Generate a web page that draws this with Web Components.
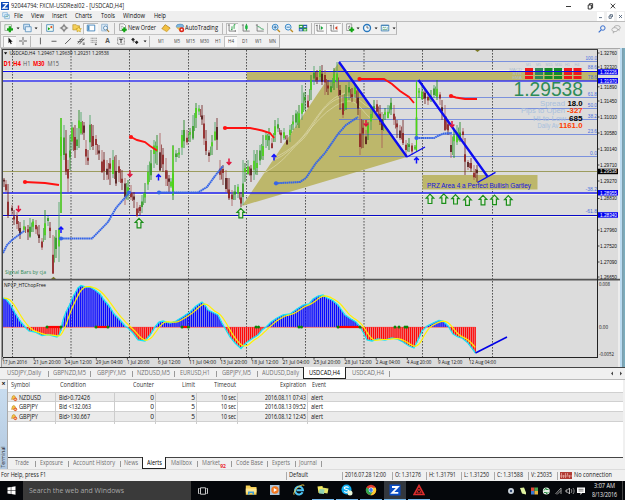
<!DOCTYPE html>
<html lang="en">
<head>
<meta charset="utf-8">
<title>92044794: FXCM-USDReal02 - [USDCAD,H4]</title>
<style>
    body {
        margin: 0;
        width: 625px;
        height: 500px;
        overflow: hidden;
        background: #f0f0f0;
        font: 6.6px/1 "Open Sans", "Liberation Sans", sans-serif;
        color: #222;
    }
</style>
</head>
<body>
<trade-window></trade-window>

<script>
// text squeezed or stretched to a fixed width
class FitText extends HTMLElement {
    constructor() {
        super()
        this.shadow = this.attachShadow({ mode: "open" })
    }
    connectedCallback() {
        const width = parseFloat(this.getAttribute('w'))
        this.shadow.innerHTML = `<style>
        :host{
            display:inline-block;
            flex:none;
            white-space:pre;
            width:${width}px;
        }
        span{
            display:inline-block;
            transform-origin:0 50%;
        }
        </style><span><slot></slot></span>`
        const span = this.shadow.querySelector('span')
        const natural = span.getBoundingClientRect().width
        span.style.transform = `scaleX(${width / natural})`
    }
}
customElements.define('fit-text', FitText)

const ICONS = {
    caret: '<path d="M4.3 5.3h3.6L6.1 7.4z" fill="#111"/>',
    newchart: '<path d="M1 2h8v7H1z" fill="#eef4ee" stroke="#7d9c7d" stroke-width=".8"/><path d="M7 4v7M3.6 7.5h7.2" stroke="#13a513" stroke-width="2.7"/>',
    profiles: '<path d="M2 1.5h7v6H2z" fill="#cfe4f6" stroke="#5c91bd"/><path d="M4 4.5h7v6H4z" fill="#e9f3fb" stroke="#5c91bd"/>',
    watch: '<path d="M2 2h8v8H2z" fill="#f4fff4" stroke="#4a87b8"/><path d="M3.5 8.7V5l3 2z" fill="#16a016"/><path d="M8.6 3.3v3.4l-3-2z" fill="#e34b16"/>',
    cross: '<circle cx="6" cy="6" r="2.8" fill="none" stroke="#555" stroke-width=".9"/><path d="M6 1v4M6 7v4M1 6h4M7 6h4" stroke="#555" stroke-width=".9"/>',
    folder: '<path d="M1 2h4l1 1.3h3v5H1z" fill="#f5d05b" stroke="#b28a1d" stroke-width=".7"/><path d="M8 4.5l1.1 2 2.2.3-1.6 1.6.4 2.2L8 9.6l-2 1 .3-2.2-1.5-1.6 2.1-.3z" fill="#ffe16b" stroke="#b98a00" stroke-width=".6"/>',
    navigator: '<path d="M1.5 2.5h9v7h-9z" fill="#fff" stroke="#3278b5"/><path d="M2 3h2.2v6H2z" fill="#4d8fc4"/>',
    tester: '<path d="M2 1.5h7v8H2z" fill="#dcebf7" stroke="#7ba4c8" stroke-width=".8"/><circle cx="6.6" cy="6" r="2.4" fill="#f2f8fd" stroke="#5182ad"/><path d="M8.3 7.8l2.6 3" stroke="#a77521" stroke-width="1.3"/>',
    order: '<path d="M2 1h5l2 2v6H2z" fill="#fff" stroke="#777" stroke-width=".8"/><path d="M3.4 4h3M3.4 6h2" stroke="#888" stroke-width=".8"/><path d="M7.5 5v6M4.5 8h6" stroke="#13a513" stroke-width="2.4"/>',
    book: '<path d="M1 7l4-5 6 4-4 4.5z" fill="#f3c141" stroke="#a8720b" stroke-width=".8"/><path d="M1 7.5l6 3.4 4-4.3" fill="none" stroke="#fff0bb" stroke-width=".6"/>',
    auto: '<ellipse cx="6" cy="4" rx="4.5" ry="2.7" fill="#7eb6e0" stroke="#3b79a9" stroke-width=".6"/><path d="M1.5 5.5h6L6 10z" fill="#edc14b"/><circle cx="8" cy="8" r="3" fill="#db2417"/><path d="M7 7h2v2H7z" fill="#fff"/>',
    bars: '<path d="M2.5 1.5v8.2h8M1 2.5h2M10 8.5v2" fill="none" stroke="#555" stroke-width=".8"/><path d="M6 4v4.5M8.5 2v5M8.5 2h1.6M4.8 8H6" stroke="#189b34" stroke-width="1" fill="none"/>',
    candle: '<path d="M2.5 1.5v8.2h8M1 2.5h2" fill="none" stroke="#555" stroke-width=".8"/><path d="M6.5 1v8" stroke="#087d23"/><path d="M5 3h3v4H5z" fill="#19b73f"/>',
    line: '<path d="M2.5 1.5v8.2h8M1 2.5h2" fill="none" stroke="#555" stroke-width=".8"/><path d="M3 4l2.5 1L8 7l2.5.6" fill="none" stroke="#22994a"/>',
    zoomin: '<circle cx="5" cy="5" r="3.5" fill="#dff1ff" stroke="#3f8bc9" stroke-width="1.2"/><path d="M7.7 7.7l3 3" stroke="#bd8b22" stroke-width="1.6"/><path d="M3 5h4M5 3v4" stroke="#20639e"/>',
    zoomout: '<circle cx="5" cy="5" r="3.5" fill="#dff1ff" stroke="#3f8bc9" stroke-width="1.2"/><path d="M7.7 7.7l3 3" stroke="#bd8b22" stroke-width="1.6"/><path d="M3 5h4" stroke="#20639e"/>',
    tile: '<path d="M1 2h5v4H1zM6 6h5v4H6z" fill="#2d9b36"/><path d="M6 2h5v4H6zM1 6h5v4H1z" fill="#245fb0"/><path d="M2 3.6h3v1.5H2zM7 3.6h3v1.5H7zM2 7.6h3v1.5H2zM7 7.6h3v1.5H7z" fill="#e9f6f0"/>',
    scroll: '<path d="M2.5 2v7.7h8M1 3h2M5.5 2v6" fill="none" stroke="#555" stroke-width=".8"/><path d="M7 3.5v5L10 6z" fill="#19a43c"/>',
    shift: '<path d="M2.5 2v7.7h8M1 3h2M5.5 2v6" fill="none" stroke="#555" stroke-width=".8"/><path d="M10 3.5v5L7 6z" fill="#d83a1b"/>',
    indic: '<path d="M2 1h6v8H2z" fill="#fff" stroke="#777" stroke-width=".8"/><path d="M3.5 7.5c2 0 1-5 3-5M3.5 4.6h3" stroke="#555" fill="none" stroke-width=".7"/><path d="M8 5v6M5 8h6" stroke="#13a513" stroke-width="2.4"/>',
    clock: '<circle cx="6" cy="6" r="4.2" fill="#f2faff" stroke="#2877bd" stroke-width="1.6"/><path d="M6 3.5V6h2" fill="none" stroke="#333" stroke-width=".8"/>',
    template: '<path d="M1.5 2.5h9v7h-9z" fill="#eef7ff" stroke="#3b7db3"/><path d="M1.5 3h9" stroke="#3b7db3"/><path d="M3 6l1.5-1 1 1L7 5M3 8h6M8 6h1.6" stroke="#3e9151" fill="none" stroke-width=".8"/>',
    search: '<circle cx="7" cy="4.8" r="2.7" fill="none" stroke="#386fd0" stroke-width="1.2"/><path d="M5 7L2 10" stroke="#386fd0" stroke-width="1.5"/>',
    chat: '<ellipse cx="7.4" cy="4.4" rx="3.7" ry="2.6" fill="#eee" stroke="#999" stroke-width=".8"/><ellipse cx="4.5" cy="6.8" rx="3.5" ry="2.4" fill="#f4f4f4" stroke="#999" stroke-width=".8"/><path d="M3 9l-.5 2 2-2M9 6.5l1 2" stroke="#999" fill="none" stroke-width=".7"/>',
    cursor: '<path d="M4.2 1.8v7l1.6-1.5 1.1 2.5 1.2-.6L7 6.9h2.2z" fill="#111"/>',
    cross2: '<path d="M6 1.3v3.9M6 6.8v3.9M1.3 6h3.9M6.8 6h3.9" stroke="#333" stroke-width=".9"/>',
    vline: '<path d="M6.5 2v8" stroke="#444"/>',
    hline: '<path d="M3 6.3h6" stroke="#444"/>',
    trend: '<path d="M2.5 9.5L9.5 2.7" stroke="#444"/>',
    channel: '<path d="M2 9L8 2M4 10l6-7M1.8 6.8l5 0M4 4.5h6M8 8.5h2.5M8 10h2.5" stroke="#444" stroke-width=".9"/>',
    fibo: '<path d="M2 2.7h8M2 5.2h8M2 7.5h8" stroke="#777" stroke-width=".9" stroke-dasharray="1.2 .4"/><path d="M8 9v2M7 10h2.6" stroke="#444" stroke-width=".8"/>',
    label: '<path d="M2 2.2h8v7.6H2z" fill="none" stroke="#555" stroke-width=".9" stroke-dasharray="1 .7"/><path d="M4 4h4M6 4v4.4" stroke="#222" stroke-width="1.1"/>',
    arrows: '<path d="M3.6 2l2.3 2.3-2.3 2L1.4 4.3zM8 5.4l2.2 2.2L8 9.8 5.8 7.6z" fill="#222"/><path d="M5 6l2 2M4 5.5V8" stroke="#222" stroke-width=".7"/>',
    bell: '<path d="M2 8c1.5-1.2.5-5.5 3.6-5.8C8.6 2.4 7.7 6 9.4 7.8z" fill="#f4c445" stroke="#af7510" stroke-width=".7"/><circle cx="8" cy="8" r="2.7" fill="#e4602c"/><path d="M6.5 8h3" stroke="#fff" stroke-width="1"/>'
}

class TradeIcon extends HTMLElement {
    constructor() {
        super()
        this.shadow = this.attachShadow({ mode: "open" })
    }
    connectedCallback() {
        const size = this.getAttribute('size') || 10
        this.shadow.innerHTML = `<style>
        :host{
            display:inline-flex;
            align-items:center;
            justify-content:center;
            flex:none;
            box-sizing:border-box;
            width:${this.getAttribute('w') || 12}px;
            height:11px;
        }
        :host([pressed]){ background:#f9f9f9; box-shadow:inset 1px 1px #bdbdbd; }
        svg{ flex:none; }
        </style>
        <svg width="${size}" height="${size}" viewBox="0 0 12 12">${ICONS[this.getAttribute('name')]}</svg>`
    }
}
customElements.define('trade-icon', TradeIcon)

class TitleBar extends HTMLElement {
    constructor() {
        super()
        this.shadow = this.attachShadow({ mode: "open" })
    }
    connectedCallback() {
        this.shadow.innerHTML = `<style>
        :host{ display:flex; align-items:center; height:11px; background:#fff; }
        .logo{ margin:0 2px 0 1px; }
        fit-text{ padding-top:1px; }
        .buttons{ margin-left:auto; }
        </style>
        <svg class="logo" width="8" height="8" viewBox="0 0 8 8"><rect width="8" height="8" fill="#0b48b8"/><path d="M1.6 1.7h4.6L2 6.2h4.7" fill="none" stroke="#fff" stroke-width="1.3"/></svg>
        <fit-text w="113"><slot></slot></fit-text>
        <svg class="buttons" width="60" height="10" viewBox="0 0 60 10" fill="none" stroke="#222" stroke-width=".9"><path d="M1 5.5h5M23.2 4h3.2v4h-3.2zM24.4 4V2.7h3.2V7h-1M45.7 2.7l4.4 4.6M50.1 2.7l-4.4 4.6"/></svg>
        `
    }
}
customElements.define('title-bar', TitleBar)

class MenuBar extends HTMLElement {
    constructor() {
        super()
        this.shadow = this.attachShadow({ mode: "open" })
    }
    connectedCallback() {
        const items = [['File', 9, 8], ['View', 13, 8], ['Insert', 15, 8], ['Charts', 17, 8.5], ['Tools', 14, 8.5], ['Window', 22, 8.5], ['Help', 12, 0]]
        this.shadow.innerHTML = `<style>
        :host{ display:flex; align-items:center; height:10px; background:#efefef; color:#111; border-bottom:1px solid #bcbcbc; }
        svg{ flex:none; margin:0 4px 0 2px; }
        .mdi{ margin:0 1px 0 auto; }
        </style>
        <svg width="8" height="8" viewBox="0 0 12 12"><path d="M1 1h7v6H1zM4 4h7v6H4z" fill="#e6f3fc" stroke="#6fa9d6"/><path d="M5 8l2-2 1 1 2-2" stroke="#5f9e62" fill="none"/></svg>
        ${items.map(i => `<fit-text w="${i[1]}" style="margin-right:${i[2]}px">${i[0]}</fit-text>`).join('')}
        <svg class="mdi" width="27" height="9" viewBox="0 0 27 9"><path d="M0 0h7v9H0zM10 0h7v9h-7zM20 0h7v9h-7z" fill="#fff"/><path d="M2 5.600h3M12 4h2.300v2.300H12zM13 4V2.700h2.500V5M22 3l3 3M25 3l-3 3" fill="none" stroke="#41566e" stroke-width=".8"/></svg>
        `
    }
}
customElements.define('menu-bar', MenuBar)

class ToolBars extends HTMLElement {
    constructor() {
        super()
        this.shadow = this.attachShadow({ mode: "open" })
    }
    icon(name, w, pressed) {
        return `<trade-icon name="${name}" w="${w}" ${pressed ? 'pressed' : ''}></trade-icon>`
    }
    sep(w) {
        return `<i style="width:${w}px"></i>`
    }
    connectedCallback() {
        const i = this.icon
        const s = this.sep
        const frames = [['M1', 18, 6], ['M5', 13, 6], ['M15', 14, 9], ['M30', 14, 9], ['H1', 13, 6], ['H4', 13, 6], ['D1', 15, 6], ['W1', 13, 7], ['MN', 14, 7]]
        this.shadow.innerHTML = `<style>
        :host{ display:block; height:26px; background:#f0f0f0; }
        .row{ display:flex; align-items:center; height:13px; box-sizing:border-box; }
        .group{ display:flex; align-items:center; height:13px; padding-left:2px; border-left:1px solid #bbb; border-right:1px solid #b5b5b5; border-bottom:1px solid #c4c4c4; box-sizing:border-box; }
        .right{ margin-left:auto; display:flex; padding-right:2px; }
        i{ flex:none; height:11px; background:linear-gradient(#b9b9b9,#b9b9b9) center/1px 100% no-repeat; }
        fit-text{ color:#111; }
        .A{ width:13px; text-align:center; font-weight:bold; color:#555; }
        .tf{ text-align:center; flex:none; font-size:5.6px; line-height:11px; }
        .tf fit-text{ color:#444; }
        .tf[pressed]{ background:#fafafa; box-shadow:inset 1px 1px #c0c0c0; }
        </style>
        <div class="row"><div class="group">
            ${i('newchart', 12)}${i('caret', 5)}${i('profiles', 14)}${i('caret', 4)}${s(6)}
            ${i('watch', 12)}${i('cross', 15)}${i('folder', 12)}${i('navigator', 15, true)}${i('tester', 13)}${s(6)}
            ${i('order', 11)}<fit-text w="28" style="margin-right:1px">New Order</fit-text>${i('book', 17)}${i('auto', 11)}<fit-text w="33" style="margin-right:1px">AutoTrading</fit-text>${s(7)}
            ${i('bars', 12, true)}${i('candle', 16)}${i('line', 12)}${s(3)}${i('zoomin', 13)}${i('zoomout', 14)}${i('tile', 13)}${s(5)}
            ${i('scroll', 12, true)}${i('shift', 15, true)}${s(3)}${i('indic', 11)}${i('caret', 5)}${i('clock', 13)}${i('caret', 5)}${i('template', 13)}${i('caret', 5)}
        </div><div class="right">${i('search', 14)}${i('chat', 14)}</div></div>
        <div class="row"><div class="group">
            ${i('cursor', 13, true)}${i('cross2', 13)}${s(3)}${i('vline', 15)}${i('hline', 14)}${i('trend', 13)}${i('channel', 13)}${i('fibo', 14)}<span class="A">A</span>${i('label', 14)}${i('arrows', 14)}${i('caret', 5)}${s(5)}
            ${frames.map(f => `<span class="tf" style="width:${f[1]}px" ${f[0] == 'H4' ? 'pressed' : ''}><fit-text w="${f[2]}">${f[0]}</fit-text></span>`).join('')}
        </div></div>
        `
    }
}
customElements.define('tool-bars', ToolBars)

// high and low of the price, x first
const RANGE = [
    [4,178,187],[6,180,192],[8,184,218],[12,205,215],[14,210,225],[17,212,229],[20,222,239],[24,220,232],[28,225,240],[30,218,238],
    [33,219,232],[36,220,234],[39,225,243],[42,238,250],[45,210,240],[48,216,226],[50,222,238],[53,235,273],[56,230,258],[59,202,262],
    [61,118,213],[64,125,160],[66,130,175],[68,160,192],[70,135,170],[72,122,150],[75,125,158],[77,128,150],[79,110,148],[81,112,135],
    [84,122,140],[86,140,165],[88,150,165],[90,115,150],[93,125,150],[96,135,155],[99,145,160],[102,150,172],[104,152,180],[107,160,180],
    [110,158,185],[113,150,178],[116,155,186],[119,160,182],[122,170,190],[125,178,205],[128,180,200],[131,185,200],[134,192,208],
    [137,202,217],[140,205,215],[142,195,213],[145,183,203],[148,165,190],[151,150,180],[154,140,168],[157,135,165],[160,133,170],
    [163,148,172],[166,158,186],[169,175,192],[171,178,188],[173,145,200],[176,150,162],[179,148,158],[182,130,155],[184,120,148],
    [187,130,145],[190,128,142],[193,115,140],[196,103,128],[199,105,115],[202,105,125],[204,115,145],[206,130,155],[209,150,162],
    [212,135,155],[215,122,140],[217,118,150],[220,160,180],[223,165,185],[226,170,192],[229,178,200],[232,190,206],[235,185,200],
    [238,184,198],[241,192,207],[243,160,205],[245,163,182],[248,160,175],[251,165,182],[254,150,180],[257,150,175],[260,145,165],
    [263,135,160],[266,132,148],[269,128,150],[272,138,148],[275,120,142],[278,118,132],[281,130,143],[284,128,140],[287,135,145],
    [290,125,142],[293,115,130],[296,110,128],[299,105,128],[302,85,120],[305,92,110],[308,95,108],[311,75,100],[314,66,85],
    [317,70,84],[320,66,80],[322,65,85],[325,70,95],[328,80,95],[331,80,92],[334,68,90],[337,62,88],[340,85,110],[343,95,118],
    [346,85,110],[349,82,100],[352,88,102],[355,85,98],[358,88,115],[360,110,155],[363,120,148],[366,130,145],[368,122,140],
    [371,105,130],[374,100,112],[377,100,115],[380,105,125],[382,112,148],[385,108,120],[388,105,118],[391,98,115],[394,105,125],
    [397,120,138],[400,125,140],[403,120,145],[406,140,157],[409,138,152],[412,143,155],[415,145,150],[416.5,80,152],[419,88,98],
    [422,85,100],[425,90,104],[428,92,105],[431,90,102],[434,85,98],[437,80,100],[440,92,105],[442,100,120],[445,105,130],
    [448,120,135],[451,135,158],[454,130,158],[457,125,145],[460,122,142],[463,128,140],[465,138,175],[468,160,170],[471,158,172],
    [474,165,180],[477,165,182]
]

const OSC = [
    [3,298],[6,299],[10,304],[15,313],[20,321],[25,327],[29,331],[35,332],[42,335.5],[48,334.5],[57,337],[59,335],[61,330],[63,320],
    [66,312],[70,304],[73,297],[78,288],[81,285.5],[86,287],[90,287],[95,290],[100,294],[104,300],[109,306],[114,314],[120,320],
    [125,326],[128,328],[133,333],[138,340],[145,341],[150,335],[155,327],[159,322],[163,321],[170,323],[176,321],[184,316],
    [190,312],[196,306],[202,302],[205,305],[208,310],[214,313],[218,315],[222,323],[226,330],[230,337],[235,343],[241,348.5],
    [246,343],[253,338],[258,335],[262,330],[266,327],[271,322],[277,318],[283,315],[290,314],[297,309],[303,305],[309,304],
    [313,299],[318,296],[323,295],[327,298],[332,300],[338,305],[345,315],[351,319],[356,322],[360,327],[363,332],[367,340],
    [372,341],[378,339],[385,340],[392,338],[397,339],[403,342],[409,346],[414,348],[418,340],[422,331],[427,326],[433,323],
    [439,320.5],[443,321],[448,326],[453,334],[458,337],[462,338],[468,343],[475.5,353]
]

const SANS = 'font-family="Liberation Sans, sans-serif"'

class PriceChart extends HTMLElement {
    constructor() {
        super()
        this.shadow = this.attachShadow({ mode: "open" })
    }
    at(list, x) {
        for (let i = 1; i < list.length; i++) {
            if (x <= list[i][0]) {
                const a = list[i - 1], b = list[i]
                const t = Math.max(0, (x - a[0]) / (b[0] - a[0]))
                return a[1] + (b[1] - a[1]) * t
            }
        }
        return list[list.length - 1][1]
    }
    text(x, y, str, len, extra = '') {
        return `<text x="${x}" y="${y}" textLength="${len}" lengthAdjust="spacingAndGlyphs" ${extra}>${str}</text>`
    }
    candle(x, hi, lo, up, k) {
        const len = lo - hi
        const top = hi + len * (0.2 + (k * 7 % 5) * 0.08)
        const body = len * (0.2 + (k * 3 % 4) * 0.1)
        const wick = up ? ['#128012', '#3fa05a'] : ['#6b1a1a', '#a85858']
        const fill = up ? ['#45d510', '#2f9a1c'] : ['#8b1a1a', '#4a1212']
        return `<path d="M${x} ${hi}V${lo}" stroke="${wick[k % 2]}" stroke-width=".8"/>
            <path d="M${x} ${top.toFixed(1)}v${body.toFixed(1)}" stroke="${fill[k % 3 ? 0 : 1]}" stroke-width="1.6"/>`
    }
    candles() {
        let out = ''
        RANGE.forEach((r, i) => {
            const next = RANGE[i + 1] || r
            const prev = RANGE[i - 1] || r
            out += this.candle(r[0], r[1], r[2], prev[1] + prev[2] > r[1] + r[2], i)
            // short bar halfway to the next one
            const hi = (r[1] + next[1]) / 2 + 4, lo = (r[2] + next[2]) / 2 - 3
            if (next[0] - r[0] > 2 && lo - hi > 2 && lo - hi < 30 && i % 2) {
                out += `<path d="M${r[0] + 1.5} ${hi}V${lo}" stroke="${next[1] + next[2] < r[1] + r[2] ? '#4aa84a' : '#8f3a3a'}" stroke-width=".8"/>`
            }
        })
        return out + '<path d="M61 118V213M173 146V192M416.5 82V151" stroke="#4bd80f" stroke-width="1.2"/>'
    }
    averages() {
        const red = [
            [[25,182],[45,183],[52,184],[59,185]],
            [[131,137],[137,140],[145,142],[150,146],[157,150.5]],
            [[225,128],[250,128],[262,130.5],[270,133],[274,138]],
            [[359.5,79],[384,79],[392,84],[400,91],[409,97],[414,103]],
            [[451,96],[456,97.5],[465,99],[477,99]]
        ]
        const blue = [
            [[3,253],[7,245],[12,240],[24,231]],
            [[61,238.5],[92,238.5],[108,222],[116,208],[129,193]],
            [[159,192.5],[198,192.5],[207,187],[215,176],[223,166]],
            [[276,183.3],[300,182],[306,178],[316,163],[325,153],[338,134],[346,125],[358,117]],
            [[416.5,138],[434,138],[440,135],[444,133.5],[452,133]]
        ]
        const draw = (list, attrs, color) => list.map(l =>
            `<polyline points="${l.join(' ')}" fill="none" stroke="${color}" ${attrs}/>` +
            (l[0][0] > 3 ? `<circle cx="${l[0][0]}" cy="${l[0][1]}" r="2.1" fill="${color}"/>` : '')).join('')
        return draw(blue, 'stroke-width="2" stroke-dasharray="1.7 .4"', '#3565e8') +
            draw(red, 'stroke-width="1.9"', '#f11') + '<circle cx="129" cy="192.5" r="2" fill="#3565e8"/>'
    }
    marks() {
        const down = [[18.5,209],[130,174],[229,162],[366,123.5],[452,124.5]]
        const up = [[61,229.5],[158.5,177],[274,157],[416.5,160]]
        const buy = [[139,223],[240.8,213],[430,198.7],[443.8,198.5],[455.5,199.2],[467.5,200.5],[483,200],[494.5,199.8],[508.3,200.3]]
        return down.map(p => `<path transform="translate(${p})" d="M0-3.500V2M-2.300 0L0 2.500 2.300 0" fill="none" stroke="#e0143c" stroke-width="1.5"/>`).join('') +
            up.map(p => `<path transform="translate(${p})" d="M0 3.500V-2M-2.300 0L0-2.500 2.300 0" fill="none" stroke="#1010ff" stroke-width="1.5"/>`).join('') +
            buy.map(p => `<path transform="translate(${p})" d="M0-4.600L3.800-.6H1.900V4.800H-1.900V-.6H-3.800z" fill="#e5eadb" stroke="#1a8e1a" stroke-width="1.2"/>`).join('')
    }
    scale() {
        const labels = [[53,'1.32760'],[67,'1.32320'],[86.8,'1.31890'],[101,'1.31450'],[117,'1.31010'],[133,'1.30580'],[149,'1.30140'],[165,'1.29710'],[181,'1.29270'],[198.5,'1.28830'],[230,'1.27960'],[246,'1.27520'],[262,'1.27090'],[277,'1.26650']]
        const tags = [[72,'1.32226','#0000f0'],[80.8,'1.31970','#0000f0'],[171.5,'1.29538','#000'],[192.8,'1.28955','#0000f0'],[215,'1.28340','#0000f0']]
        const fib = [[61.5,'100.0'],[70.5,'88.6'],[80,'78.6'],[97.5,'61.8'],[108.5,'50.0'],[119.5,'38.2'],[134,'23.6'],[156.5,'0.0'],[192,'-38.2'],[214.5,'-61.8']]
        return labels.map(l => `<path d="M597 ${l[0]}h2.5" stroke="#222" stroke-width=".8"/>` + this.text(600, l[0] + 1.8, l[1], 17, SANS + ' font-size="5.2"')).join('') +
            tags.map(t => `<rect x="598" y="${t[0] - 2.8}" width="20" height="5.5" fill="${t[2]}"/>` + this.text(600, t[0] + 1.8, t[1], 17, SANS + ' font-size="5.2" fill="#fff"')).join('') +
            fib.map(f => this.text(597 - f[1].length * 2.3, f[0] - 1.2, f[1], f[1].length * 2.3, SANS + ' fill="#4a6fe0" font-size="5"')).join('')
    }
    signals() {
        const xs = [525, 535, 544.5, 554, 564, 573.5]
        const cols = ['#f01818', '#2e8b57', '#158c28', '#158c28', '#f01818', '#f01818']
        const heads = ['M1', 'M5', 'M15', 'M30', 'H1', 'H4']
        let out = ''
        xs.forEach((x, i) => {
            out += this.text(x + 1, 66.2, heads[i], heads[i].length == 3 ? 7 : 5, SANS + ' fill="#a9bdd2" font-size="4"')
            for (let r = 0; r < 3; r++) out += `<rect x="${x}" y="${68 + r * 4}" width="8" height="3" fill="${cols[i]}"/>`
        })
        const names = ['MACD', 'STR', 'EMA']
        names.forEach((n, i) => out += this.text(522 - n.length * 3.2, 71 + i * 4, n, n.length * 3.2, SANS + ' fill="#aebfcd" font-size="3.2"'))
        const rows = [['Spread', '18.0', 540, 25, 567.5, '#000'], ['Pips to Open', '-327', 521, 44, 567, '#ff3c00'], ['Hi to Low', '685', 533, 33, 569, '#000'], ['Daily Av', '1161.0', 537.5, 21, 559, '#ff3c00']]
        out += this.text(513.5, 95.8, '1.29538', 69.5, SANS + ' fill="#2e8b57" font-size="20.5"')
        rows.forEach((r, i) => {
            const y = 106 + i * 7.4
            out += this.text(r[2], y, r[0], r[3], SANS + ' fill="#a8bfdc" font-size="7.6"')
            out += this.text(r[4], y, r[1], 582.5 - r[4], SANS + ` fill="${r[5]}" font-size="7.6" font-weight="bold"`)
        })
        return out
    }
    oscillator() {
        let bars = '', yellow = []
        for (let x = 4; x < 476; x += 1.955) {
            const y = this.at(OSC, x)
            bars += `<path d="M${x.toFixed(2)} 327V${y.toFixed(1)}" stroke="${y < 327 ? '#0808ff' : '#ff0808'}"/>`
            let sum = 0
            for (let k = 0; k < 5; k++) sum += this.at(OSC, Math.max(3, x - k * 2))
            yellow.push(x.toFixed(1) + ',' + (sum / 5).toFixed(1))
        }
        const chop = [[47,61],[96,108],[182,188.5],[338,360]]
        const dots = [47,61,96,108,182,188.5,256,258.5,299,301.5,338,360,395,399,405,407]
        return `<g stroke-width="1.45">${bars}</g>
            <path d="M3 327.3H475.5" stroke="#f33" stroke-width=".6"/>
            <polyline points="${OSC.join(' ')}" fill="none" stroke="#14e6f4" stroke-width="1.3"/>
            <polyline points="${yellow.join(' ')}" fill="none" stroke="#fff200" stroke-width="1.2"/>
            ${chop.map(c => `<path d="M${c[0]} 327H${c[1]}" stroke="#f00" stroke-width="2.2"/>`).join('')}
            ${dots.map(d => `<circle cx="${d}" cy="327" r="1.5" fill="#0a860a"/>`).join('')}
            <path d="M475.5 353L507 337" stroke="#0000e6" stroke-width="1.5"/>`
    }
    dates() {
        const list = ['17 Jun 2016', '21 Jun 20:00', '24 Jun 12:00', '29 Jun 04:00', '1 Jul 20:00', '6 Jul 12:00', '11 Jul 04:00', '13 Jul 20:00', '18 Jul 12:00', '21 Jul 04:00', '25 Jul 20:00', '28 Jul 12:00', '2 Aug 04:00', '4 Aug 20:00', '9 Aug 12:00', '12 Aug 04:00']
        return list.map((d, i) => `<path d="M${3 + i * 31.1} 357.5v2.2" stroke="#222" stroke-width=".8"/>` +
            this.text(2.5 + i * 31.1, 363.6, d, d.length > 11 ? 27 : i < 6 && i ? 22.5 : 24.5)).join('')
    }
    // presentation attributes lose to the text rule, so they move into style
    styled(markup) {
        return markup.replace(/<text ([^>]*)>/g, (m, attrs) => {
            let css = ''
            attrs = attrs.replace(/(fill|font-size|font-family|font-weight)="([^"]*)"/g, (a, k, v) => {
                css += `${k}:${v}${k == 'font-size' ? 'px' : ''};`
                return ''
            })
            return `<text ${attrs} style="${css}">`
        })
    }
    connectedCallback() {
        const grid = [12.5, 71, 129.5, 188.5, 246.5, 305.5, 364, 422.5, 492.5]
        this.shadow.innerHTML = `<style>
        :host{ display:block; height:319px; }
        svg{ display:block; }
        text{ font-family:"Open Sans", sans-serif; font-size:5.6px; fill:#111; }
        </style>
        <svg width="625" height="319" viewBox="0 48 625 319">
            <defs><clipPath id="pane"><rect x="3" y="50" width="594" height="307"/></clipPath></defs>
            <rect y="48" width="625" height="319" fill="#dcdcdc"/>
            <path d="M0 48.5H620" stroke="#a9a9a9"/>
            <path d="M2 49.5H598" stroke="#3c3c3c"/>
            <path d="M.5 48V367" stroke="#e8e8e8"/><path d="M1.5 48V367" stroke="#999"/><path d="M2.5 49V357" stroke="#444"/>
            <rect x="618" y="49" width="2" height="318" fill="#ececec"/>
            <rect x="620" y="48" width="2.5" height="319" fill="#b9daf0"/>
            <rect x="622.5" y="48" width="1" height="319" fill="#2b6478"/>
            <rect x="623.5" y="48" width="1.5" height="319" fill="#7badbf"/>
            <g clip-path="url(#pane)">
                <path d="${grid.map(x => `M${x} 50V357`).join('')}" stroke="#444" stroke-width=".9" stroke-dasharray="1.6 1.4"/>
                <path d="M3 70.5H597M3 79.5H597M3 194.5H597M3 216.5H597" stroke="#f6f6dc"/>
                <path d="M247 72H597V81H247zM242 206L339 62 407 157zM422.5 175H537.5V189.5H422.5z" fill="#bdb76b"/>
                <path d="M3 171.5H597" stroke="#8c8c3e" stroke-width=".8"/>
                <path d="M339 61.5H597M339 97.5H597M339 108.5H597M339 119.5H597M339 134.5H597M339 156.5H597" stroke="#5070dc" stroke-width=".7"/>
                <path d="M3 71.5H597" stroke="#0c0cf0"/><path d="M3 81H597" stroke="#3838f0" stroke-width="1.6"/>
                <path d="M3 193H597" stroke="#2020f0" stroke-width="1.6"/><path d="M3 215.5H597" stroke="#0808c8"/>
                <path d="M262 174C285 162 290 150 301 141S320 104 340 98 360 106 374 109M272 161C300 150 312 120 335 106S360 112 372 119M276 157C290 150 300 142 310 127S330 97 345 93" fill="none" stroke="#ddd8ad" stroke-width=".7"/>
                ${this.candles()}
                ${this.averages()}
                <path d="M339 62L407 157M418.5 80L487.5 176.5" stroke="#0c0cf0" stroke-width="2.3"/>
                <path d="M407 157L425 147M477.5 182.5L495.5 172.3" stroke="#0c0cf0" stroke-width="1.4"/>
                ${this.marks()}
                <path d="M475 50h5l-2.5 2zM51 279l2.5-2.2 2.5 2.2z" fill="#7c7a23"/>
                ${this.oscillator()}
            </g>
            <path d="M4 52.3h3.2L5.6 54.5z" fill="#000"/>
            ${this.text(9.5, 55.3, 'USDCAD,H4&#160; 1.29467 1.29639 1.29231 1.29538', 99.5)}
            <g font-weight="bold">
                ${this.text(3.5, 66, 'D1', 7.5, 'style="fill:#f00;font-size:7px"')}
                ${this.text(13, 66, 'H4', 8, 'style="fill:#f00;font-size:7px"')}
                ${this.text(23, 66, 'H1', 7.5, 'style="fill:#555;font-size:7px;font-weight:normal"')}
                ${this.text(33, 66, 'M30', 11.5, 'style="fill:#f00;font-size:7px"')}
                ${this.text(47.5, 66, 'M15', 11.5, 'style="fill:#555;font-size:7px;font-weight:normal"')}
            </g>
            ${this.styled(this.scale())}
            ${this.styled(this.signals())}
            ${this.text(5, 273.5, 'Signal Bars by cja', 41, 'style="fill:#2e8b57;font-size:6px"')}
            ${this.text(427, 188, 'PRZ Area 4 a Perfect Bullish Gartley', 104, 'style="fill:#1414e0;font:6.6px Liberation Sans, sans-serif"')}
            <path d="M3 279.7H620" stroke="#555" stroke-width="1.8"/>
            <path d="M597.5 50V357.5M3 357.5H598" stroke="#222" fill="none"/>
            ${this.text(4, 287, 'NPCP_HTChopFree', 42)}
            ${this.text(599, 286, '0.008', 11)}${this.text(599, 329, '0.00', 9)}${this.text(599, 356, '-0.0052', 15)}
            ${this.dates()}
        </svg>`
    }
}
customElements.define('price-chart', PriceChart)

// strip of tabs, each [label, text width, tab width, 1 if selected or a counter]
class TabStrip extends HTMLElement {
    constructor() {
        super()
        this.shadow = this.attachShadow({ mode: "open" })
    }
    connectedCallback() {
        const tabs = JSON.parse(this.getAttribute('tabs'))
        this.shadow.innerHTML = `<style>
        :host{ display:flex; align-items:stretch; height:11px; background:#f0f0f0; border-top:1px solid #444; box-sizing:border-box; color:#707070; }
        span{ display:flex; align-items:center; justify-content:center; flex:none; box-sizing:border-box; }
        span:not(.on)::after{ content:""; align-self:center; width:1px; height:6px; background:#999; margin-right:-1px; margin-left:auto; }
        span:not(.on) fit-text{ margin-left:auto; }
        .on{ background:#fff; color:#000; border:solid #222; border-width:0 1px 1px; margin-top:-1px; padding-top:1px; }
        sub{ color:#e8262a; font-size:5px; line-height:3px; align-self:flex-end; margin-bottom:1px; font-weight:bold; }
        slot{ display:block; margin-left:auto; }
        </style>
        ${tabs.map(t => `<span class="${t[3] == 1 ? 'on' : ''}" style="width:${t[2]}px"><fit-text w="${t[1]}">${t[0]}</fit-text>${t[3] > 1 ? `<sub>${t[3]}</sub>` : ''}</span>`).join('')}
        <slot></slot>`
    }
}
customElements.define('tab-strip', TabStrip)

class TerminalPanel extends HTMLElement {
    constructor() {
        super()
        this.shadow = this.attachShadow({ mode: "open" })
    }
    connectedCallback() {
        const rows = [
            ['NZDUSD', 22, 'Bid>0.72426', 31, '2016.08.11 07:43'],
            ['GBPJPY', 19, 'Bid <132.063', 32, '2016.08.13 09:52'],
            ['GBPJPY', 19, 'Bid>130.667', 31, '2016.08.12 12:45']
        ]
        const tabs = [['Trade', 14, 27], ['Exposure', 23, 33], ['Account History', 42, 52], ['News', 14, 22], ['Alerts', 15, 24, 1], ['Mailbox', 21, 31], ['Market', 18, 34, 92], ['Code Base', 27, 36], ['Experts', 18, 28], ['Journal', 18, 26]]
        this.shadow.innerHTML = `<style>
        :host{ display:flex; height:90px; background:#f0f0f0; border-top:1px solid #bbb; box-sizing:border-box; }
        .side{ width:7px; display:flex; flex-direction:column; align-items:center; justify-content:space-between; flex:none; background:linear-gradient(#f0f0f0 9px,#c8dcef 9px,#b2c8df); color:#111; }
        .side b{ font-size:7px; line-height:7px; }
        .main{ flex:1; display:flex; flex-direction:column; background:#fff; border-left:1px solid #aaa; border-right:2px solid #f0f0f0; min-width:0; }
        .r{ display:grid; grid-template-columns:48px 59px 41px 41px 41px 70px 1fr; height:9.7px; align-items:stretch; border-bottom:1px solid #d0d0d0; box-sizing:border-box; color:#111; }
        .r>div{ display:flex; align-items:center; padding:0 1px 1px 3px; border-right:1px solid #ccc; }
        .r>div:last-child{ border:0; }
        .r .n{ justify-content:flex-end; }
        .r.head{ height:12.5px; color:#333; }
        .r.head>div{ border-color:transparent; padding-bottom:0; }
        .head>div:last-child{ padding-left:4px; }
        .r:nth-child(even){ background:#ebebeb; }
        tab-strip{ margin-top:auto; height:12px; }
        </style>
        <div class="side"><b>×</b><svg width="7" height="24" viewBox="0 0 7 24"><text transform="translate(5.3 22.5) rotate(-90)" textLength="21" lengthAdjust="spacingAndGlyphs" font-size="4.9" fill="#111">Terminal</text></svg></div>
        <div class="main">
            <div class="r head">
                <div><fit-text w="19">Symbol</fit-text></div>
                <div style="padding-left:4px"><fit-text w="26">Condition</fit-text></div>
                <div class="n"><fit-text w="21">Counter</fit-text></div>
                <div class="n"><fit-text w="13">Limit</fit-text></div>
                <div class="n"><fit-text w="22">Timeout</fit-text></div>
                <div class="n"><fit-text w="26">Expiration</fit-text></div>
                <div><fit-text w="14">Event</fit-text></div>
            </div>
            ${rows.map(r => `<div class="r">
                <div style="padding-left:1px"><trade-icon name="bell" w="10" size="8"></trade-icon><fit-text w="${r[1]}">${r[0]}</fit-text></div>
                <div><fit-text w="${r[3]}">${r[2]}</fit-text></div>
                <div class="n">0</div>
                <div class="n">5</div>
                <div class="n"><fit-text w="15">10 sec</fit-text></div>
                <div class="n"><fit-text w="41">${r[4]}</fit-text></div>
                <div><fit-text w="12">alert</fit-text></div>
            </div>`).join('')}
            <tab-strip tabs='${JSON.stringify(tabs)}'></tab-strip>
        </div>`
    }
}
customElements.define('terminal-panel', TerminalPanel)

class StatusBar extends HTMLElement {
    constructor() {
        super()
        this.shadow = this.attachShadow({ mode: "open" })
    }
    connectedCallback() {
        const cells = [['Default', 19, 56], ['2016.07.28 12:00', 41, 50], ['O: 1.31276', 26, 34], ['H: 1.31791', 27, 35], ['L: 1.31250', 25, 33], ['C: 1.31588', 26, 34], ['V: 25035', 21, 29]]
        this.shadow.innerHTML = `<style>
        :host{ display:flex; align-items:center; height:12px; background:#f0f0f0; border-top:1px solid #dcdcdc; box-sizing:border-box; color:#222; }
        .help{ width:285px; padding-left:1px; }
        span{ display:flex; align-items:center; height:8px; box-sizing:border-box; padding-left:2px; border-left:1px solid #aaa; flex:none; }
        svg{ margin-right:2px; }
        </style>
        <div class="help"><fit-text w="45">For Help, press F1</fit-text></div>
        ${cells.map(c => `<span style="width:${c[2]}px"><fit-text w="${c[1]}">${c[0]}</fit-text></span>`).join('')}
        <span><svg width="12" height="7" viewBox="0 0 12 7"><rect width="12" height="7" fill="#b23b34"/><path d="M1.5 1v5M3.5 3v3M5.5 1v5M7.5 1v2.5M9.5 3v3M0 4h12" stroke="#e9b0a9" stroke-width=".7"/></svg><fit-text w="38">No connection</fit-text></span>`
    }
}
customElements.define('status-bar', StatusBar)

class TaskBar extends HTMLElement {
    constructor() {
        super()
        this.shadow = this.attachShadow({ mode: "open" })
    }
    app(art, state = '') {
        return `<div class="app ${state}"><svg width="12" height="12" viewBox="0 0 12 12">${art}</svg></div>`
    }
    connectedCallback() {
        this.shadow.innerHTML = `<style>
        :host{ display:flex; align-items:center; height:19px; background:#05070b; color:#eee; }
        .start{ width:23px; display:flex; justify-content:center; }
        .search{ width:168px; height:19px; display:flex; align-items:center; background:#3a3a3a; color:#a8a8a8; font-size:7.4px; padding-left:6px; box-sizing:border-box; }
        .view{ width:24px; display:flex; justify-content:center; margin-right:24px; }
        .app{ width:22px; margin:0 1px; height:19px; display:flex; align-items:center; justify-content:center; box-sizing:border-box; border-bottom:1px solid transparent; }
        .run{ border-color:#76b9ed; }
        .active{ background:#33373d; }
        .tray{ margin-left:auto; display:flex; align-items:center; }
        .clock{ display:flex; flex-direction:column; align-items:center; gap:2px; width:36px; font-size:6.2px; margin-left:1px; margin-right:2px; border-right:1px solid #444; height:19px; justify-content:center; }
        </style>
        <div class="start"><svg width="9" height="9" viewBox="0 0 9 9"><path d="M.5 1.5l3.3-.5v3.2H.5zM4.3.9L8.5.3v3.9H4.3zM.5 4.8h3.3V8L.5 7.5zM4.3 4.8h4.2v3.9l-4.2-.6z" fill="#fff"/></svg></div>
        <div class="search"><fit-text w="95">Search the web and Windows</fit-text></div>
        <div class="view"><svg width="10" height="8" viewBox="0 0 10 8"><path d="M2.5.8h5v6.4h-5zM1.5 1.5h-1v5h1M8.5 1.5h1v5h-1" fill="none" stroke="#ddd" stroke-width=".9"/></svg></div>
        ${this.app('<path d="M.8 1.5h4L6 3h5.5v7.7H.8z" fill="#f5cf55"/><path d="M.8 4.5h10.7v4H.8z" fill="#ffe791"/><path d="M3 7.5h6v3.2H7.5V9h-3v1.7H3z" fill="#3e9dd7"/>')}
        ${this.app('<rect x="1" y="1" width="9.5" height="10" fill="#a9c4dc"/><circle cx="6" cy="6" r="3.7" fill="#f47820"/><path d="M4.8 4v4l3.3-2z" fill="#fff"/>')}
        ${this.app('<path d="M9.6 8.3A4 4 0 1 1 10 6.2H3.5" fill="none" stroke="#4fc4f3" stroke-width="2"/><path d="M1 10.7C-.5 8 7-1 11.3 1.3" fill="none" stroke="#f3cf4b"/>')}
        ${this.app('<path d="M.5 2.5l5-.6 1 6-5 1z" fill="#f7ea5f"/><path d="M5 3.5l6.5 1-1 5-6-1z" fill="#e4e36a"/><path d="M2.5 5l5 .5-.5 4.5-5-.5z" fill="#8fd3b4"/>', 'run')}
        ${this.app('<circle cx="5.5" cy="5.5" r="5" fill="#10aef1"/><path d="M7.6 3.6c-1-1-4.5-1-4.3.7.2 1.6 4.3.8 4.3 2.5S4.5 8.800 3.200 7.400" fill="none" stroke="#fff" stroke-width="1.2"/><circle cx="9" cy="9" r="2.5" fill="#eaf6d8"/>', 'run')}
        ${this.app('<circle cx="6" cy="6" r="5.2" fill="#e33b2e"/><path d="M6 6L1.5 3.4A5.2 5.2 0 0 0 5.5 11.2L8.3 7z" fill="#2fa84f"/><path d="M6 6L8.3 7 5.6 11.2A5.2 5.2 0 0 0 10.7 3.8H6z" fill="#fbce33"/><circle cx="6" cy="6" r="2.4" fill="#fff"/><circle cx="6" cy="6" r="1.9" fill="#3d7ff0"/>', 'run')}
        ${this.app('<rect x=".5" y=".5" width="11" height="11" fill="#0b4dc5"/><path d="M3 3h5.8L3.3 8.8H9.3" fill="none" stroke="#fff" stroke-width="1.8"/>', 'run active')}
        ${this.app('<path d="M6 1.5l5 9H1z" fill="none" stroke="#dc2c2c" stroke-width="1.6"/><path d="M6 5l2.2 3.9H3.8z" fill="none" stroke="#dc2c2c"/>', 'run')}
        <div class="tray">
            <svg width="78" height="12" viewBox="508 0 78 12">
                <circle cx="512" cy="6" r="3" fill="#ccd4dc"/><circle cx="512" cy="6" r="1.2" fill="#334a73"/>
                <path d="M521 3l4-.5 2 5v2l-4-1z" fill="#e0f2a0"/>
                <path d="M532 2.5h3.5V6H532z" fill="#e04938"/><path d="M535.5 2.5h3.5V6h-3.5z" fill="#4ba54f"/><path d="M532 6h3.5v3.5H532z" fill="#3a78d2"/><path d="M535.5 6h3.5v3.5h-3.5z" fill="#e8b33c"/>
                <circle cx="547.3" cy="6" r="3.5" fill="#e5eee5"/><path d="M545 5.5l2-2.5v1.5h2.5M549.5 7l-2 2V7.5H545" stroke="#31914a" fill="none"/>
                <path d="M556.5 9l5.5-6v6M558 9.5l4-4" stroke="#999" fill="none"/>
                <path d="M567 5h1.5l2-2v6l-2-2H567z" fill="none" stroke="#ddd" stroke-width=".8"/><path d="M572 4c1 1 1 3 0 4M574 3c1.5 2 1.5 4 0 6" stroke="#aaa" fill="none" stroke-width=".8"/>
                <path d="M578 2.5h8v5.5h-3l-1.5 2V8H578z" fill="#fff"/><path d="M579.5 4.3h5M579.5 6h5" stroke="#444" stroke-width=".7"/>
            </svg>
            <div class="clock"><fit-text w="21">3:07 AM</fit-text><fit-text w="25">8/13/2016</fit-text></div>
        </div>`
    }
}
customElements.define('task-bar', TaskBar)

class TradeWindow extends HTMLElement {
    constructor() {
        super()
        this.shadow = this.attachShadow({ mode: "open" })
    }
    connectedCallback() {
        const charts = [['USDJPY,Daily', 34, 48], ['GBPNZD,M5', 33, 42], ['GBPJPY,M5', 29, 42], ['NZDUSD,M5', 33, 42], ['EURUSD,H1', 30, 42], ['GBPJPY,M5', 29, 41], ['AUDUSD,Daily', 37, 46], ['USDCAD,H4', 31, 43, 1], ['USDCAD,H4', 32, 43]]
        this.shadow.innerHTML = `<style>
        :host{ display:flex; flex-direction:column; width:625px; height:500px; }
        :host>*{ flex:none; }
        .charts{ height:12px; }
        </style>
        <title-bar>92044794: FXCM-USDReal02 - [USDCAD,H4]</title-bar>
        <menu-bar></menu-bar>
        <tool-bars></tool-bars>
        <price-chart></price-chart>
        <tab-strip class="charts" tabs='${JSON.stringify(charts)}'><svg width="16" height="10" viewBox="0 0 16 10" fill="#444"><path d="M4 3.5v4L2 5.5zM11 3.5v4l2-2z"/></svg></tab-strip>
        <terminal-panel></terminal-panel>
        <status-bar></status-bar>
        <task-bar></task-bar>`
    }
}
customElements.define('trade-window', TradeWindow)
</script>
</body>
</html>
